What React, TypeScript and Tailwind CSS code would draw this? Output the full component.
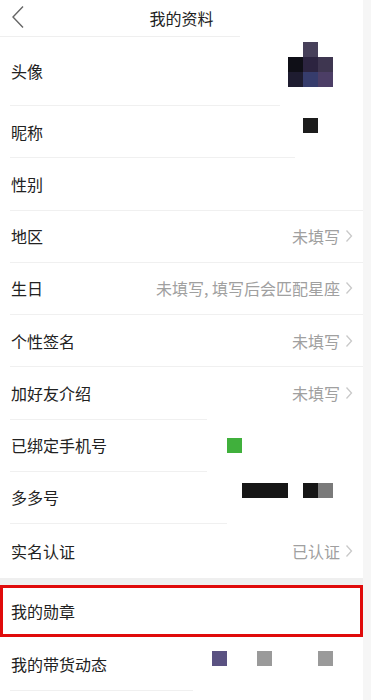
import React from "react";

const Chevron = () => (
  <svg width="8" height="14" viewBox="0 0 8 14" className="ml-[5px] shrink-0">
    <polyline points="1.5,1.5 6.5,7 1.5,12.5" fill="none" stroke="#c9c9c9" strokeWidth="1.3" />
  </svg>
);

type RowProps = { label: string; value?: string; h: string };

const Row = ({ label, value, h }: RowProps) => (
  <div className={`flex items-center justify-between pl-[11px] pr-[10px] ${h}`}>
    <span className="text-[16px] text-[#222222]">{label}</span>
    {value ? (
      <span className="flex items-center">
        <span className="text-[16px] text-[#a0a0a0]">{value}</span>
        <Chevron />
      </span>
    ) : null}
  </div>
);

const Divider = ({ w }: { w: string }) => (
  <div className="h-px pl-[10px]">
    <div className={`h-px bg-[#f0f0f0] ${w}`} />
  </div>
);

const Block = ({ x, y, w, h, c }: { x: number; y: number; w: number; h: number; c: string }) => (
  <div className="absolute" style={{ left: x, top: y, width: w, height: h, background: c }} />
);

export default function App() {
  return (
    <div
      className="flex h-[700px] w-[371px] overflow-hidden bg-white"
      style={{ fontFamily: '"Noto Sans CJK SC", "Noto Sans", sans-serif' }}
    >
      <div className="relative flex w-[363px] flex-col bg-white">
        {/* header */}
        <div className="relative flex h-[36px] items-center justify-center">
          <svg width="14" height="24" viewBox="0 0 14 24" className="absolute left-[11px] top-[5px]">
            <polyline points="12,1.5 2,12 12,22.5" fill="none" stroke="#666666" strokeWidth="1.4" />
          </svg>
          <span className="text-[16px] text-[#222222]">我的资料</span>
        </div>
        <div className="h-px w-[240px] bg-[#efefef]" />

        {/* avatar */}
        <div className="flex h-[68px] items-center pl-[11px]">
          <span className="text-[16px] text-[#222222]">头像</span>
        </div>
        <Divider w="w-[270px]" />

        <Row label="昵称" h="h-[51.25px]" />
        <Divider w="w-[285px]" />
        <Row label="性别" h="h-[51.25px]" />
        <Divider w="w-full" />
        <Row label="地区" value="未填写" h="h-[51.25px]" />
        <Divider w="w-full" />
        <Row label="生日" value="未填写, 填写后会匹配星座" h="h-[51.25px]" />
        <Divider w="w-full" />
        <Row label="个性签名" value="未填写" h="h-[51.25px]" />
        <Divider w="w-full" />
        <Row label="加好友介绍" value="未填写" h="h-[51.25px]" />
        <Divider w="w-[197px]" />
        <Row label="已绑定手机号" h="h-[51.25px]" />
        <Divider w="w-[197px]" />
        <Row label="多多号" h="h-[51.25px]" />
        <Divider w="w-[217px]" />
        <Row label="实名认证" value="已认证" h="h-[54px]" />

        <div className="h-[7px] bg-[#efefef]" />

        <div className="flex h-[52px] items-center border-[3px] border-[#e00b0b] pl-[8px]">
          <span className="text-[16px] text-[#222222]">我的勋章</span>
        </div>

        <Row label="我的带货动态" h="h-[53px]" />
        <Divider w="w-[183px]" />

        {/* pixelated overlays */}
        <Block x={303} y={42} w={15} h={15} c="#47405a" />
        <Block x={288} y={57} w={15} h={15} c="#0f0f17" />
        <Block x={303} y={57} w={15} h={15} c="#2c2440" />
        <Block x={318} y={57} w={15} h={15} c="#3e3650" />
        <Block x={288} y={72} w={15} h={15} c="#1e1c30" />
        <Block x={303} y={72} w={15} h={15} c="#363c6c" />
        <Block x={318} y={72} w={15} h={15} c="#4c3e66" />

        <Block x={303} y={118} w={15} h={15} c="#1c1c1c" />

        <Block x={227} y={438} w={15} h={15} c="#40b03c" />

        <Block x={242} y={483} w={46} h={15} c="#161616" />
        <Block x={303} y={483} w={15} h={15} c="#161616" />
        <Block x={318} y={483} w={15} h={15} c="#7a7a7a" />

        <Block x={212} y={651} w={15} h={15} c="#5a5282" />
        <Block x={257} y={651} w={15} h={15} c="#9a9a9a" />
        <Block x={318} y={651} w={15} h={15} c="#9a9a9a" />
      </div>
      <div className="w-[8px] bg-[#f6f6f6]" />
    </div>
  );
}
